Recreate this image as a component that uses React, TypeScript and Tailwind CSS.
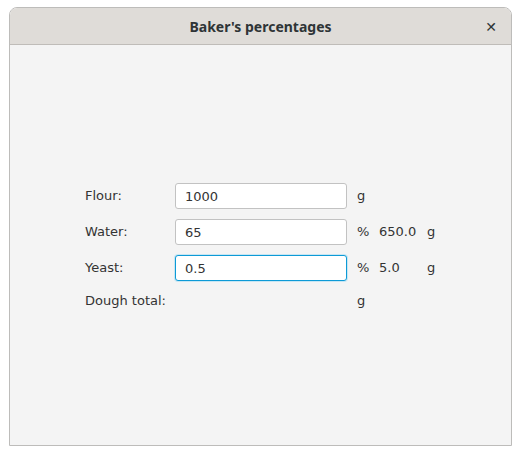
import { useState } from "react";

const rows = [
  { label: "Flour:", value: "1000", pct: "", amount: "", unit: "g" },
  { label: "Water:", value: "65", pct: "%", amount: "650.0", unit: "g" },
  { label: "Yeast:", value: "0.5", pct: "%", amount: "5.0", unit: "g" },
];

const App = () => {
  const [values, setValues] = useState(rows.map((r) => r.value));

  return (
    <div className="h-[455px] w-[520px] bg-white pl-[9px] pt-[7px] font-['DejaVu_Sans',sans-serif] text-[13px] text-[#333333]">
      <div className="flex h-[439px] w-[503px] flex-col overflow-hidden rounded-t-[8px] border border-[#bdbcba]">
        {/* Header bar */}
        <div className="relative flex h-[37px] shrink-0 items-center justify-center border-b border-[#bfbcb8] bg-[#dfdcd8]">
          <span className="font-['Noto_Sans',sans-serif] text-[14px] font-bold text-[#2e3436]">
            Baker's percentages
          </span>
          <span className="absolute right-[14px] top-[9px] text-[14px] font-bold text-[#2e3436]">
            ✕
          </span>
        </div>

        {/* Form */}
        <div className="flex-1 bg-[#f4f4f4] pl-[75px] pt-[138px]">
          <div className="grid grid-cols-[90px_172px_32px_48px_auto] items-center gap-y-[10px]">
            {rows.map((row, i) => (
              <div key={row.label} className="contents">
                <span>{row.label}</span>
                <input
                  value={values[i]}
                  onChange={(e) =>
                    setValues(values.map((v, j) => (j === i ? e.target.value : v)))
                  }
                  className={
                    i === 2
                      ? "h-[26px] w-[172px] rounded-[3px] border border-[#0d9ad6] bg-white px-[9px] text-[#333333] shadow-[0_0_0_1px_#c7e6f3] outline-none"
                      : "h-[26px] w-[172px] rounded-[3px] border border-[#c2c2c2] bg-white px-[9px] text-[#333333] outline-none"
                  }
                />
                <span className="pl-[10px]">{row.pct || row.unit}</span>
                <span>{row.amount}</span>
                <span>{row.pct ? row.unit : ""}</span>
              </div>
            ))}
            <span>Dough total:</span>
            <span />
            <span className="pl-[10px]">g</span>
            <span />
            <span />
          </div>
        </div>
      </div>
    </div>
  );
};

export default App;
